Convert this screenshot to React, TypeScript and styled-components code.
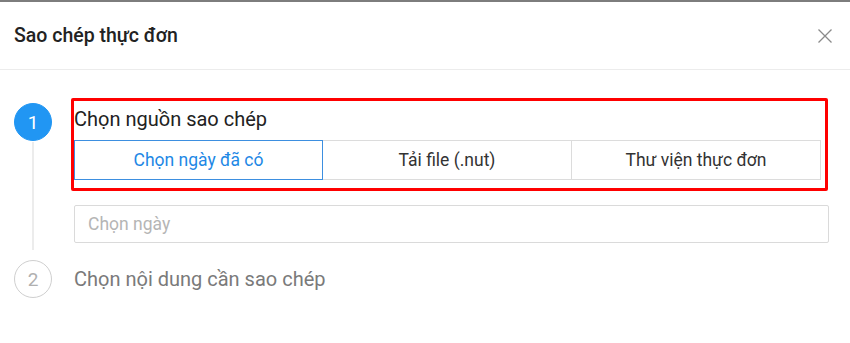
import React, { useState } from "react";
import styled, { createGlobalStyle } from "styled-components";

const GlobalStyle = createGlobalStyle`
  html, body {
    margin: 0;
    padding: 0;
    background: #fff;
    font-family: Roboto, "Liberation Sans", Arial, sans-serif;
  }
  * { box-sizing: border-box; }
`;

const sources = ["Chọn ngày đã có", "Tải file (.nut)", "Thư viện thực đơn"];

const App = (): React.ReactElement => {
  const [active, setActive] = useState<number>(0);

  return (
    <Modal>
      <GlobalStyle />
      <Header>
        <Title>Sao chép thực đơn</Title>
        <CloseButton aria-label="close">
          <svg width="16" height="16" viewBox="0 0 16 16">
            <path d="M1.5 1.5 L14.5 14.5 M14.5 1.5 L1.5 14.5" stroke="#8a8a8a" strokeWidth="1.3" fill="none" />
          </svg>
        </CloseButton>
      </Header>

      <Steps>
        <StepRow $last={false}>
          <Rail>
            <StepCircle $active>1</StepCircle>
            <RailLine />
          </Rail>
          <StepBody $last={false}>
            <Section>
              <Highlight />
              <StepTitle $active>Chọn nguồn sao chép</StepTitle>
              <Tabs>
                {sources.map((s, i) => (
                  <Tab key={s} $active={i === active} onClick={() => setActive(i)}>
                    {s}
                  </Tab>
                ))}
              </Tabs>
            </Section>
            <DateInput placeholder="Chọn ngày" />
          </StepBody>
        </StepRow>

        <StepRow $last>
          <Rail>
            <StepCircle $active={false}>2</StepCircle>
          </Rail>
          <StepBody $last>
            <StepTitle $active={false}>Chọn nội dung cần sao chép</StepTitle>
          </StepBody>
        </StepRow>
      </Steps>
    </Modal>
  );
};

export default App;

const Modal = styled.div`
  width: 850px;
  height: 343px;
  border-top: 2px solid #7d7d7d;
  background: #fff;
`;

const Header = styled.div`
  height: 68px;
  padding: 0 14px;
  display: flex;
  align-items: center;
  justify-content: space-between;
  border-bottom: 1px solid #ececec;
`;

const Title = styled.div`
  font-size: 19.5px;
  font-weight: 500;
  color: #222;
  margin-top: -1px;
`;

const CloseButton = styled.button`
  border: 0;
  background: none;
  padding: 0;
  width: 16px;
  height: 16px;
  margin-right: 3px;
  display: flex;
  cursor: pointer;
`;

const Steps = styled.div`
  padding: 30px 21px 0 14px;
`;

const StepRow = styled.div<{ $last: boolean }>`
  display: flex;
  gap: 22px;
  margin-top: ${(p) => (p.$last ? "10px" : "0")};
`;

const Rail = styled.div`
  width: 38px;
  flex-shrink: 0;
  display: flex;
  flex-direction: column;
  align-items: center;
`;

const StepCircle = styled.div<{ $active: boolean }>`
  width: 38px;
  height: 38px;
  border-radius: 50%;
  margin-top: ${(p) => (p.$active ? "3px" : "0")};
  display: flex;
  align-items: center;
  justify-content: center;
  font-size: 19px;
  background: ${(p) => (p.$active ? "#2196f3" : "#fff")};
  color: ${(p) => (p.$active ? "#fff" : "#b0b0b0")};
  border: 1px solid ${(p) => (p.$active ? "#2196f3" : "#cfcfcf")};
`;

const RailLine = styled.div`
  flex: 1;
  width: 2px;
  margin-top: 1px;
  background: #ececec;
`;

const StepBody = styled.div<{ $last: boolean }>`
  flex: 1;
  display: flex;
  flex-direction: column;
  justify-content: ${(p) => (p.$last ? "center" : "flex-start")};
  padding-bottom: ${(p) => (p.$last ? "0" : "7px")};
`;

const Section = styled.div`
  position: relative;
  padding-top: 7px;
`;

const Highlight = styled.span`
  position: absolute;
  top: -2px;
  left: -3px;
  right: 1px;
  bottom: -11px;
  border: 3px solid #f00;
  border-radius: 2px;
  pointer-events: none;
`;

const StepTitle = styled.div<{ $active: boolean }>`
  font-size: 20px;
  line-height: 24px;
  color: ${(p) => (p.$active ? "#222" : "#7a7a7a")};
`;

const Tabs = styled.div`
  margin-top: 9px;
  width: calc(100% - 8px);
  display: grid;
  grid-template-columns: repeat(3, 1fr);
`;

const Tab = styled.div<{ $active: boolean }>`
  position: relative;
  height: 40px;
  display: flex;
  align-items: center;
  justify-content: center;
  font-size: 17.5px;
  cursor: pointer;
  color: ${(p) => (p.$active ? "#1e88e5" : "#333")};
  border: 1px solid ${(p) => (p.$active ? "#3d8fe0" : "#dcdcdc")};
  margin-left: -1px;
  z-index: ${(p) => (p.$active ? 1 : 0)};
  &:first-child {
    margin-left: 0;
  }
`;

const DateInput = styled.input`
  margin-top: 25px;
  height: 38px;
  width: 100%;
  border: 1px solid #dadada;
  border-radius: 2px;
  padding: 0 13px;
  font-family: inherit;
  font-size: 17.5px;
  color: #333;
  outline: none;
  &::placeholder {
    color: #b5b5b5;
  }
`;
